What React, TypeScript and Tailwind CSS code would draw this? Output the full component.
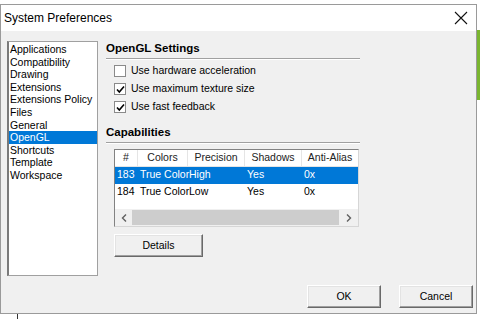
import { useState } from 'react'

const PAGES = [
  'Applications',
  'Compatibility',
  'Drawing',
  'Extensions',
  'Extensions Policy',
  'Files',
  'General',
  'OpenGL',
  'Shortcuts',
  'Template',
  'Workspace',
]

const ROWS = [
  { id: '183', colors: 'True Color', precision: 'High', shadows: 'Yes', aa: '0x' },
  { id: '184', colors: 'True Color', precision: 'Low', shadows: 'Yes', aa: '0x' },
]

function CheckBox({ checked, label }: { checked: boolean; label: string }) {
  return (
    <div className="flex items-center h-[18px]">
      <div className="w-[12px] h-[12px] border border-[#8a8a8a] bg-white flex items-center justify-center">
        {checked && (
          <svg width="9" height="9" viewBox="0 0 9 9">
            <path d="M1 4.5 L3.3 7 L8 1.5" stroke="#000" strokeWidth="1.6" fill="none" />
          </svg>
        )}
      </div>
      <span className="ml-[5px]">{label}</span>
    </div>
  )
}

function Section({ title }: { title: string }) {
  return (
    <div className="w-[254px]">
      <p className="font-bold text-[11.5px] leading-[14px]">{title}</p>
      <div className="mt-[3px] h-[2px] border-t border-[#a0a0a0] border-b border-b-white" />
    </div>
  )
}

function Button({ label, className }: { label: string; className: string }) {
  return (
    <button
      className={`${className} bg-[#f0f0f0] border border-t-white border-l-white border-r-[#696969] border-b-[#696969] shadow-[inset_-1px_-1px_0_#a0a0a0,inset_1px_1px_0_#e3e3e3] flex items-center justify-center`}
    >
      {label}
    </button>
  )
}

export default function App() {
  const [selected] = useState('OpenGL')

  return (
    <div
      className="relative w-[480px] h-[319px] bg-white overflow-hidden text-[10.5px] text-black"
      style={{ fontFamily: '"Liberation Sans", Arial, sans-serif' }}
    >
      <div className="absolute right-0 top-[30px] w-[3px] h-[70px] bg-[#7ab530]" />
      <div className="absolute left-[17px] top-[313px] w-[1px] h-[6px] bg-[#333]" />

      <div className="absolute left-0 top-[4px] w-[477px] h-[310px] border border-[#9a9a9a] flex flex-col bg-[#f0f0f0]">
        <div className="h-[26px] bg-white flex items-center justify-between pl-[3px] pr-[8px] shrink-0">
          <span className="text-[12px]">System Preferences</span>
          <svg width="14" height="14" viewBox="0 0 14 14">
            <path d="M1 1 L13 13 M13 1 L1 13" stroke="#111" strokeWidth="1.1" />
          </svg>
        </div>

        <div className="flex-1 relative">
          <div className="flex pt-[10px] pl-[6px]">
            <div className="w-[91px] h-[235px] bg-white border border-[#a0a0a0] border-l-2 border-l-[#7a7a7a] pt-[1px]">
              {PAGES.map(p => (
                <div
                  key={p}
                  className={`h-[12.6px] leading-[12.6px] pl-[1px] whitespace-nowrap ${
                    p === selected ? 'bg-[#0078d7] text-white' : ''
                  }`}
                >
                  {p}
                </div>
              ))}
            </div>

            <div className="ml-[8px] flex flex-col">
              <Section title="OpenGL Settings" />
              <div className="pl-[8px] pt-[2px]">
                <CheckBox checked={false} label="Use hardware acceleration" />
                <CheckBox checked label="Use maximum texture size" />
                <CheckBox checked label="Use fast feedback" />
              </div>

              <div className="mt-[9px]">
                <Section title="Capabilities" />
              </div>

              <div className="ml-[8px] mt-[5px] w-[245px] h-[78px] bg-white border border-[#828282] border-r-[#d6d6d6] border-b-[#d6d6d6] flex flex-col">
                <div className="flex h-[17px] border-b border-[#e5e5e5] text-[#222]">
                  <div className="w-[23px] flex items-center justify-center border-r border-[#e5e5e5]">#</div>
                  <div className="w-[50px] flex items-center justify-center border-r border-[#e5e5e5]">Colors</div>
                  <div className="w-[57px] flex items-center justify-center border-r border-[#e5e5e5]">Precision</div>
                  <div className="w-[57px] flex items-center justify-center border-r border-[#e5e5e5]">Shadows</div>
                  <div className="w-[56px] flex items-center justify-center">Anti-Alias</div>
                </div>
                {ROWS.map((r, i) => (
                  <div
                    key={r.id}
                    className={`flex h-[16.5px] items-center whitespace-nowrap ${i === 0 ? 'bg-[#0078d7] text-white' : ''}`}
                  >
                    <div className="w-[23px] pl-[2px]">{r.id}</div>
                    <div className="w-[50px] pl-[2px]">{r.colors}</div>
                    <div className="w-[57px] pl-[1px]">{r.precision}</div>
                    <div className="w-[57px] pl-[2px]">{r.shadows}</div>
                    <div className="w-[56px] pl-[2px]">{r.aa}</div>
                  </div>
                ))}
                <div className="flex-1" />
                <div className="h-[17px] bg-[#f0f0f0] flex items-center">
                  <div className="w-[17px] flex items-center justify-center">
                    <svg width="6" height="8" viewBox="0 0 6 8">
                      <path d="M5 0.5 L1.5 4 L5 7.5" stroke="#606060" strokeWidth="1.4" fill="none" />
                    </svg>
                  </div>
                  <div className="flex-1 h-[15px] bg-[#cdcdcd]" />
                  <div className="w-[19px] flex items-center justify-center">
                    <svg width="6" height="8" viewBox="0 0 6 8">
                      <path d="M1 0.5 L4.5 4 L1 7.5" stroke="#606060" strokeWidth="1.4" fill="none" />
                    </svg>
                  </div>
                </div>
              </div>

              <Button label="Details" className="ml-[8px] mt-[7px] w-[89px] h-[23px]" />
            </div>
          </div>

          <div className="absolute right-[3px] bottom-[5px] flex gap-[18px]">
            <Button label="OK" className="w-[74px] h-[23px]" />
            <Button label="Cancel" className="w-[74px] h-[23px]" />
          </div>
        </div>
      </div>
    </div>
  )
}
